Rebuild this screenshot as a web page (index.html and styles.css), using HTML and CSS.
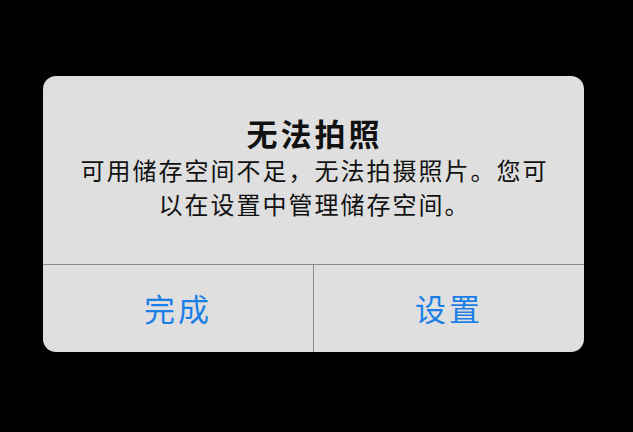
FILE: index.html
```html
<!DOCTYPE html>
<html lang="zh-CN">
<head>
  <meta charset="UTF-8">
  <title>无法拍照</title>
  <link rel="stylesheet" href="styles.css">
</head>
<body>
  <div class="alert">
    <div class="alert-body">
      <h2 class="alert-title">无法拍照</h2>
      <p class="alert-message">可用储存空间不足，无法拍摄照片。您可以在设置中管理储存空间。</p>
    </div>
    <div class="alert-actions">
      <button class="alert-btn">完成</button>
      <button class="alert-btn">设置</button>
    </div>
  </div>
</body>
</html>
```

FILE: styles.css
```css
html, body {
  margin: 0;
  padding: 0;
  background: #000;
  height: 100%;
}
body {
  padding: 76px 0 0 43px;
  box-sizing: border-box;
  font-family: "Noto Sans CJK SC", "Noto Sans", sans-serif;
}
.alert {
  width: 541px;
  height: 276px;
  background: #dfdfdf;
  border-radius: 13px;
  display: flex;
  flex-direction: column;
  overflow: hidden;
}
.alert-body {
  height: 188px;
  box-sizing: border-box;
  padding: 37px 30px 0 32px;
  text-align: center;
  color: #111;
}
.alert-title {
  margin: 0;
  font-size: 31px;
  font-weight: bold;
  line-height: 40px;
  letter-spacing: 3px;
}
.alert-message {
  margin: 0;
  font-size: 24px;
  line-height: 34px;
  letter-spacing: 2px;
}
.alert-actions {
  flex: 1;
  display: flex;
  border-top: 1px solid #8a8a8a;
}
.alert-btn {
  flex: 1;
  background: none;
  border: none;
  margin: 0;
  padding: 0 0 2px;
  font-family: inherit;
  font-size: 31px;
  letter-spacing: 3px;
  color: #1c7fe6;
}
.alert-btn + .alert-btn {
  border-left: 1px solid #8a8a8a;
}
```
